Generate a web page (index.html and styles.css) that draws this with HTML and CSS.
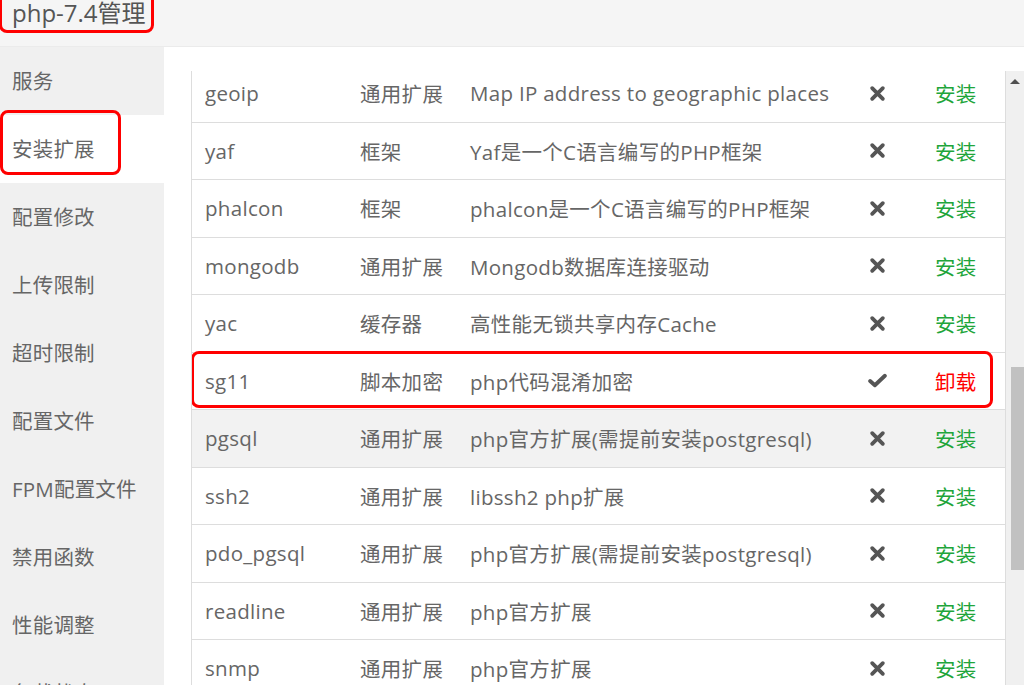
FILE: index.html
```html
<!DOCTYPE html>
<html lang="zh-CN">
<head>
<meta charset="utf-8">
<title>php-7.4管理</title>
<link rel="stylesheet" href="styles.css">
</head>
<body>
<div class="page">
  <header class="header">
    <div class="title">php-7.4管理</div>
    <span class="mark mark-title"></span>
  </header>
  <div class="layout">
    <nav class="sidebar">
      <div class="nav-item">服务</div>
      <div class="nav-item active">安装扩展<span class="mark mark-nav"></span></div>
      <div class="nav-item">配置修改</div>
      <div class="nav-item">上传限制</div>
      <div class="nav-item">超时限制</div>
      <div class="nav-item">配置文件</div>
      <div class="nav-item">FPM配置文件</div>
      <div class="nav-item">禁用函数</div>
      <div class="nav-item">性能调整</div>
      <div class="nav-item">负载状态</div>
    </nav>
    <main class="main">
      <div class="scroller">
        <div class="table">
          <div class="row">
            <div class="c name">geoip</div><div class="c type">通用扩展</div><div class="c desc">Map IP address to geographic places</div>
            <div class="c status"><svg class="ico-x" viewBox="0 0 16 16"><path d="M3 3L13 13M13 3L3 13"/></svg></div><div class="c act install">安装</div>
          </div>
          <div class="row">
            <div class="c name">yaf</div><div class="c type">框架</div><div class="c desc">Yaf是一个C语言编写的PHP框架</div>
            <div class="c status"><svg class="ico-x" viewBox="0 0 16 16"><path d="M3 3L13 13M13 3L3 13"/></svg></div><div class="c act install">安装</div>
          </div>
          <div class="row">
            <div class="c name">phalcon</div><div class="c type">框架</div><div class="c desc">phalcon是一个C语言编写的PHP框架</div>
            <div class="c status"><svg class="ico-x" viewBox="0 0 16 16"><path d="M3 3L13 13M13 3L3 13"/></svg></div><div class="c act install">安装</div>
          </div>
          <div class="row">
            <div class="c name">mongodb</div><div class="c type">通用扩展</div><div class="c desc">Mongodb数据库连接驱动</div>
            <div class="c status"><svg class="ico-x" viewBox="0 0 16 16"><path d="M3 3L13 13M13 3L3 13"/></svg></div><div class="c act install">安装</div>
          </div>
          <div class="row">
            <div class="c name">yac</div><div class="c type">缓存器</div><div class="c desc">高性能无锁共享内存Cache</div>
            <div class="c status"><svg class="ico-x" viewBox="0 0 16 16"><path d="M3 3L13 13M13 3L3 13"/></svg></div><div class="c act install">安装</div>
          </div>
          <div class="row marked">
            <div class="c name">sg11</div><div class="c type">脚本加密</div><div class="c desc">php代码混淆加密</div>
            <div class="c status"><svg class="ico-ok" viewBox="0 0 18 14"><path d="M2 7.5L6.5 11.5L16 2.5"/></svg></div><div class="c act uninstall">卸载</div>
            <span class="mark mark-row"></span>
          </div>
          <div class="row hover">
            <div class="c name">pgsql</div><div class="c type">通用扩展</div><div class="c desc">php官方扩展(需提前安装postgresql)</div>
            <div class="c status"><svg class="ico-x" viewBox="0 0 16 16"><path d="M3 3L13 13M13 3L3 13"/></svg></div><div class="c act install">安装</div>
          </div>
          <div class="row">
            <div class="c name">ssh2</div><div class="c type">通用扩展</div><div class="c desc">libssh2 php扩展</div>
            <div class="c status"><svg class="ico-x" viewBox="0 0 16 16"><path d="M3 3L13 13M13 3L3 13"/></svg></div><div class="c act install">安装</div>
          </div>
          <div class="row">
            <div class="c name">pdo_pgsql</div><div class="c type">通用扩展</div><div class="c desc">php官方扩展(需提前安装postgresql)</div>
            <div class="c status"><svg class="ico-x" viewBox="0 0 16 16"><path d="M3 3L13 13M13 3L3 13"/></svg></div><div class="c act install">安装</div>
          </div>
          <div class="row">
            <div class="c name">readline</div><div class="c type">通用扩展</div><div class="c desc">php官方扩展</div>
            <div class="c status"><svg class="ico-x" viewBox="0 0 16 16"><path d="M3 3L13 13M13 3L3 13"/></svg></div><div class="c act install">安装</div>
          </div>
          <div class="row">
            <div class="c name">snmp</div><div class="c type">通用扩展</div><div class="c desc">php官方扩展</div>
            <div class="c status"><svg class="ico-x" viewBox="0 0 16 16"><path d="M3 3L13 13M13 3L3 13"/></svg></div><div class="c act install">安装</div>
          </div>
        </div>
      </div>
      <div class="scrollbar">
        <div class="arrow-up"></div>
        <div class="thumb"></div>
      </div>
    </main>
  </div>
</div>
</body>
</html>
```
FILE: styles.css
```css
* { box-sizing: border-box; }
html, body { margin: 0; padding: 0; }
body {
  font-family: "Open Sans", "Noto Sans CJK SC", sans-serif;
  color: #666;
  background: #fff;
  overflow: hidden;
}
.page { width: 1024px; height: 685px; overflow: hidden; display: flex; flex-direction: column; }

.header {
  position: relative;
  height: 47px;
  flex: none;
  background: #f5f5f5;
  border-bottom: 1px solid #ebebeb;
  padding: 0 0 0 12px;
}
.title {
  display: inline-block;
  font-size: 24px;
  line-height: 26px;
  color: #555;
}
.mark {
  position: absolute;
  border: 3px solid #f00;
  border-radius: 8px;
  pointer-events: none;
}
.mark-title { left: -1px; top: -10px; width: 155px; height: 43px; }

.layout { flex: 1; display: flex; min-height: 0; }
.sidebar {
  width: 164px;
  flex: none;
  background: #f0f0f0;
}
.nav-item {
  position: relative;
  height: 68px;
  line-height: 68px;
  padding-left: 12px;
  font-size: 20.5px;
  letter-spacing: 0.2px;
  color: #666;
}
.nav-item.active { background: #fff; }
.mark-nav { left: 0; top: -5px; width: 121px; height: 65px; }

.main {
  flex: 1;
  display: flex;
  padding: 24px 0 0 27px;
  background: #fff;
  min-width: 0;
}
.scroller {
  width: 815px;
  flex: none;
  overflow: hidden;
  border-left: 1px solid #ddd;
  border-right: 1px solid #ddd;
}
.table { margin-top: -6px; }
.row {
  position: relative;
  display: grid;
  grid-template-columns: 155px 110px 389px 62px 97px;
  height: 57.5px;
  border-bottom: 1px solid #ddd;
  align-items: center;
  font-size: 20.5px;
  letter-spacing: 0.3px;
}
.row.hover { background: #f2f2f2; }
.c { padding-left: 13px; white-space: nowrap; }
.status { padding-left: 0; display: flex; justify-content: center; }
.act { padding-left: 27px; }
.install { color: #20a53a; }
.uninstall { color: #f00; }
.ico-x { width: 17px; height: 17px; }
.ico-x path { stroke: #555; stroke-width: 3.6; stroke-linecap: round; fill: none; }
.ico-ok { width: 19px; height: 15px; }
.ico-ok path { stroke: #555; stroke-width: 3.6; stroke-linecap: round; stroke-linejoin: round; fill: none; }
.mark-row { left: -1px; top: -2px; right: 12px; bottom: 1px; }

.scrollbar {
  position: relative;
  width: 18px;
  flex: none;
  background: #f0f0f0;
}
.arrow-up {
  margin: 8px auto 0;
  width: 0; height: 0;
  border-left: 5px solid transparent;
  border-right: 5px solid transparent;
  border-bottom: 5px solid #505050;
}
.thumb {
  position: absolute;
  left: 5px; right: 0;
  top: 296px;
  height: 203px;
  background: #c1c1c1;
}
```
